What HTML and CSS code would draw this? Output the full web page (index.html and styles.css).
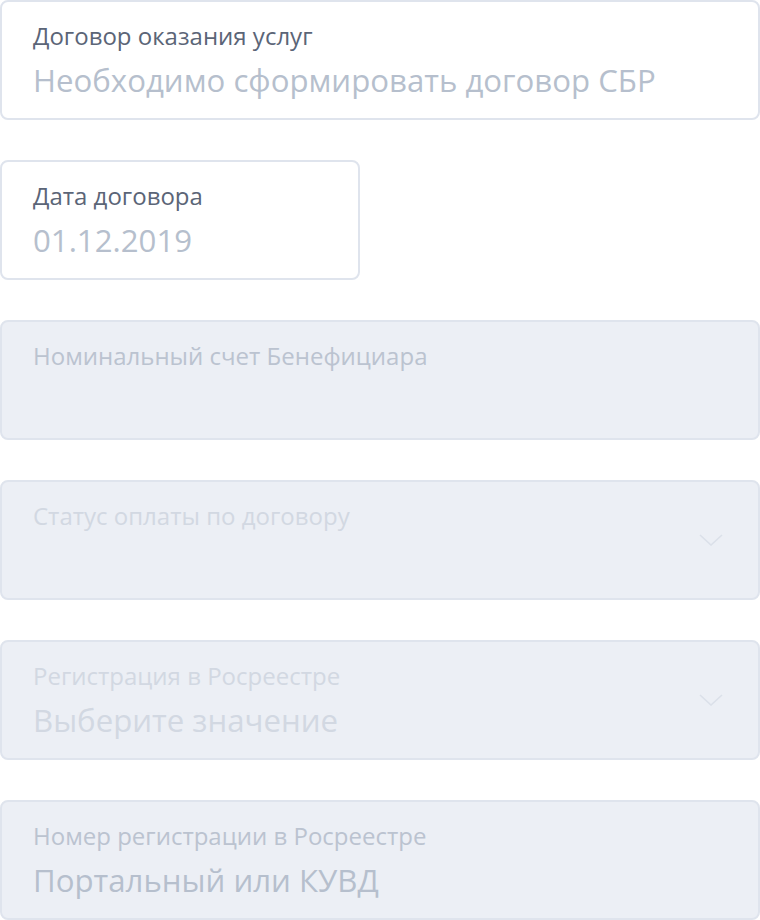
FILE: index.html
```html
<!DOCTYPE html>
<html lang="ru">
<head>
<meta charset="utf-8">
<link rel="stylesheet" href="styles.css">
</head>
<body>
<div class="form">
  <div class="field">
    <div class="label">Договор оказания услуг</div>
    <div class="value">Необходимо сформировать договор СБР</div>
  </div>
  <div class="field narrow">
    <div class="label">Дата договора</div>
    <div class="value">01.12.2019</div>
  </div>
  <div class="field disabled">
    <div class="label">Номинальный счет Бенефициара</div>
    <div class="value"></div>
  </div>
  <div class="field disabled select faint">
    <div class="body">
      <div class="label">Статус оплаты по договору</div>
      <div class="value"></div>
    </div>
    <svg class="chevron" width="24" height="12" viewBox="0 0 24 12"><path d="M1 1 L12 11 L23 1" fill="none" stroke="#dbe0e9" stroke-width="1.6"/></svg>
  </div>
  <div class="field disabled select faint">
    <div class="body">
      <div class="label">Регистрация в Росреестре</div>
      <div class="value">Выберите значение</div>
    </div>
    <svg class="chevron" width="24" height="12" viewBox="0 0 24 12"><path d="M1 1 L12 11 L23 1" fill="none" stroke="#dbe0e9" stroke-width="1.6"/></svg>
  </div>
  <div class="field disabled">
    <div class="label">Номер регистрации в Росреестре</div>
    <div class="value">Портальный или КУВД</div>
  </div>
</div>
</body>
</html>
```
FILE: styles.css
```css
html, body { margin: 0; padding: 0; background: #fff; }
body { font-family: "Open Sans", "Noto Sans", sans-serif; }
.form { display: flex; flex-direction: column; gap: 40px; width: 760px; }
.field {
  box-sizing: border-box;
  height: 120px;
  border: 2px solid #dfe4ed;
  border-radius: 8px;
  padding: 18px 30px 0 31px;
  background: #fff;
}
.narrow { width: 360px; }
.label { font-size: 24px; line-height: 32px; color: #5b6577; white-space: nowrap; }
.value { font-size: 31.2px; line-height: 40px; color: #b6bfcd; margin-top: 8px; height: 40px; white-space: nowrap; }
.disabled { background: #eceff5; }
.disabled .label { color: #bbc3d0; }
.faint .label, .faint .value { color: #d2d8e2; }
.select { display: flex; align-items: center; justify-content: space-between; padding-right: 35px; }
.select .body { align-self: flex-start; }
.chevron { display: block; margin-bottom: 18px; }
```
